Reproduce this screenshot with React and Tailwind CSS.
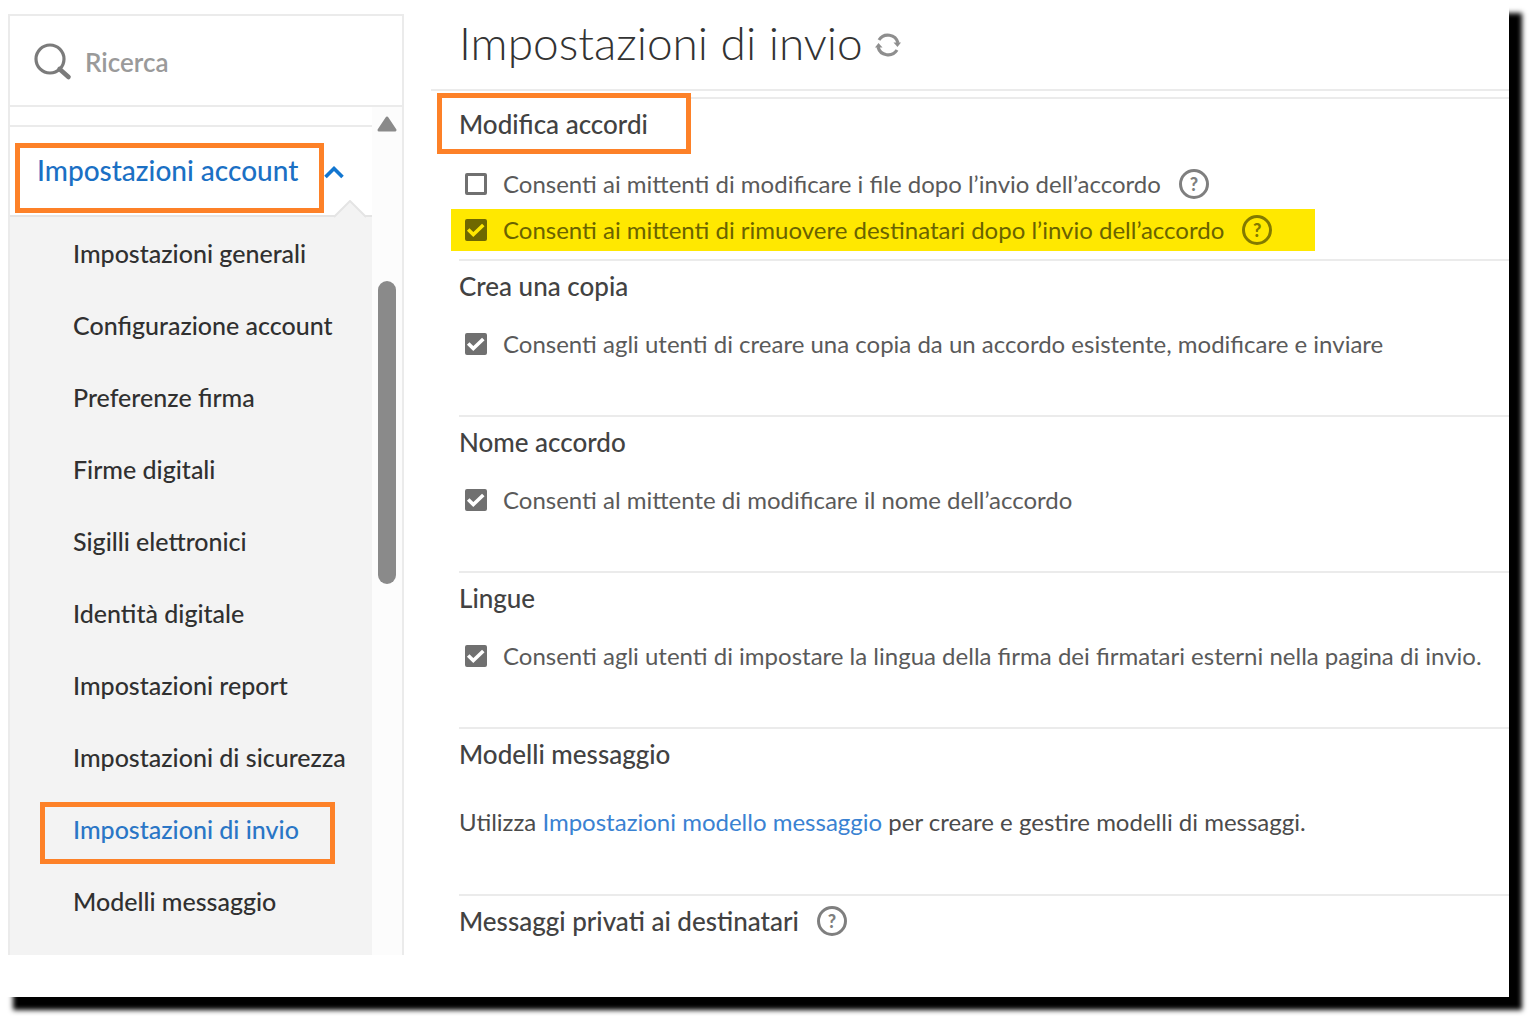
import React, { useState } from 'react';

const menuItems = [
  'Impostazioni generali',
  'Configurazione account',
  'Preferenze firma',
  'Firme digitali',
  'Sigilli elettronici',
  'Identità digitale',
  'Impostazioni report',
  'Impostazioni di sicurezza',
  'Impostazioni di invio',
  'Modelli messaggio',
];

const HelpButton = ({ highlighted }) => (
  <button
    type="button"
    aria-label="Aiuto"
    className={`ml-[18px] flex h-[30px] w-[30px] shrink-0 items-center justify-center rounded-full border-3 text-lg leading-5 font-black ${
      highlighted ? 'border-[#827a00] text-[#827a00]' : 'border-[#7f7f7f] text-[#7f7f7f]'
    }`}
  >
    ?
  </button>
);

const CheckOption = ({ id, label, defaultChecked, highlighted, help }) => {
  const [checked, setChecked] = useState(defaultChecked);

  return (
    <div className={`flex h-[42px] items-center ${highlighted ? 'text-[#6a6300]' : 'text-[#5a5a5a]'}`}>
      <span className="relative mr-4 h-[22px] w-[22px] shrink-0">
        <input
          id={id}
          type="checkbox"
          checked={checked}
          onChange={(e) => setChecked(e.target.checked)}
          className={`block h-[22px] w-[22px] appearance-none rounded-xs border-3 ${
            highlighted
              ? 'border-[#6f6800] checked:bg-[#6f6800]'
              : 'border-[#707070] checked:bg-[#707070]'
          }`}
        />
        {checked && (
          <svg
            viewBox="0 0 22 22"
            fill="none"
            stroke={highlighted ? '#ffe800' : '#ffffff'}
            strokeWidth="3.6"
            className="pointer-events-none absolute inset-0 h-[22px] w-[22px]"
          >
            <path d="M3.2 10.5 L8.3 15.5 L18.3 6" />
          </svg>
        )}
      </span>
      <label htmlFor={id} className="text-2xl whitespace-nowrap">{label}</label>
      {help && <HelpButton highlighted={highlighted} />}
    </div>
  );
};

const Section = ({ title, help, children }) => (
  <section className="border-t-2 border-[#ebebeb] pt-[9px]">
    <div className="flex h-8 items-center">
      <h2 className="text-[26px] leading-8 font-medium text-[#424242]">{title}</h2>
      {help && <HelpButton />}
    </div>
    {children}
  </section>
);

const Sidebar = () => (
  <aside className="mt-[14px] ml-2 w-[396px] shrink-0 border-2 border-b-0 border-[#ebebeb]">
    <div className="flex h-[91px] items-center border-b-2 border-[#ebebeb] pt-[2px] pl-6">
      <svg viewBox="0 0 38 38" fill="none" stroke="#7b7b7b" className="h-[38px] w-[38px] shrink-0">
        <circle cx="16" cy="16" r="14" strokeWidth="3.2" />
        <path d="M25.5 26 L34.5 34" strokeWidth="4.6" strokeLinecap="round" />
      </svg>
      <input
        type="text"
        aria-label="Ricerca"
        placeholder="Ricerca"
        className="ml-[13px] w-60 text-[26px] leading-8 font-semibold text-[#333333] outline-none placeholder:text-[#9a9a9a]"
      />
    </div>

    <div className="flex">
      <nav className="flex-1 bg-[#f3f3f3]">
        <div className="h-5 border-b-2 border-[#ebebeb] bg-white" />
        <div className="relative flex h-[90px] border-b-2 border-[#e4e4e4] bg-white pt-4 pl-[5px]">
          <button
            type="button"
            aria-expanded="true"
            className="flex h-[70px] w-[309px] shrink-0 items-center border-5 border-[#fd8128] pb-4 pl-[17px] text-[28px] leading-8 font-medium whitespace-nowrap text-[#1b70c4]"
          >
            Impostazioni account
          </button>
          <svg viewBox="0 0 20 14" fill="none" stroke="#1276d0" strokeWidth="3.6" className="mt-[22px] h-[14px] w-5">
            <path d="M1.5 12 L10 3.5 L18.5 12" />
          </svg>
          {/* punta del sottomenu */}
          <svg viewBox="0 0 32 18" className="absolute right-[6px] -bottom-[3px] h-[18px] w-8">
            <path d="M0 18 L16 2 L32 18 Z" fill="#f3f3f3" />
            <path d="M0 17 L16 1 L32 17" fill="none" stroke="#e4e4e4" strokeWidth="2" />
          </svg>
        </div>

        <ul className="pb-[18px] text-[25px] leading-8 font-medium whitespace-nowrap text-[#303030]">
          {menuItems.map((item) =>
            item === 'Impostazioni di invio' ? (
              <li key={item} className="h-[72px] pt-[9px] pl-[30px]">
                <a
                  href="#invio"
                  aria-current="page"
                  className="flex h-[62px] w-[295px] items-center border-5 border-[#fd8128] pb-2 pl-7 text-[#2a76c6]"
                >
                  {item}
                </a>
              </li>
            ) : (
              <li key={item}>
                <a href="#menu" className="flex h-[72px] items-center pl-[63px]">{item}</a>
              </li>
            )
          )}
        </ul>
      </nav>

      {/* barra di scorrimento */}
      <div className="flex w-[30px] flex-col items-center bg-[#fcfcfc] pt-[9px]">
        <svg viewBox="0 0 20 16" className="h-4 w-5">
          <path d="M10 2 L18 14 H2 Z" fill="#8a8a8a" stroke="#8a8a8a" strokeWidth="3" strokeLinejoin="round" />
        </svg>
        <div className="mt-[149px] h-[303px] w-[18px] rounded-full bg-[#8a8a8a]" />
      </div>
    </div>
  </aside>
);

const App = () => {
  return (
    <div className="overflow-hidden bg-white pr-[29px] pb-[19px] font-['Lato','Open_Sans',sans-serif]">
      <div className="flex bg-white pb-[42px] shadow-[13px_13px_5px_0_#000000]">
        <Sidebar />

        <main className="ml-[27px] min-w-0 flex-1">
          <header className="flex h-[91px] items-center border-b-2 border-[#ebebeb] pl-7">
            <h1 className="pb-1 text-[46px] leading-[52px] font-light text-[#333333]">Impostazioni di invio</h1>
            <button type="button" aria-label="Aggiorna" className="ml-3">
              <svg viewBox="0 0 26 26" fill="none" stroke="#8e8e8e" strokeWidth="3.2" className="h-[26px] w-[26px]">
                <path d="M4 8 A10.5 10.5 0 0 1 23 11" />
                <path d="M22 18 A10.5 10.5 0 0 1 3 15" />
                <path d="M18.5 10.5 H26 L22.5 15 Z" fill="#8e8e8e" stroke="none" />
                <path d="M0 15.5 H7.5 L3.5 11 Z" fill="#8e8e8e" stroke="none" />
              </svg>
            </button>
          </header>

          <div className="mt-[6px] pl-7">
            <section className="border-t-2 border-[#ebebeb]">
              <h2 className="relative -mt-[6px] -ml-[22px] flex h-[61px] w-[254px] items-center border-5 border-[#fd8128] bg-white pl-[17px] text-[26px] leading-8 font-medium text-[#424242]">
                Modifica accordi
              </h2>
              <div className="mt-[9px] pl-[6px]">
                <CheckOption id="modifica-file" label="Consenti ai mittenti di modificare i file dopo l’invio dell’accordo" defaultChecked={false} help />
              </div>
              <div className="mt-1 mb-2 -ml-2 w-[864px] max-w-full bg-[#ffe800] pl-[14px]">
                <CheckOption id="rimuovi-destinatari" label="Consenti ai mittenti di rimuovere destinatari dopo l’invio dell’accordo" defaultChecked highlighted help />
              </div>
            </section>

            <Section title="Crea una copia">
              <div className="mt-[21px] mb-[50px] pl-[6px]">
                <CheckOption id="crea-copia" label="Consenti agli utenti di creare una copia da un accordo esistente, modificare e inviare" defaultChecked />
              </div>
            </Section>

            <Section title="Nome accordo">
              <div className="mt-[21px] mb-[50px] pl-[6px]">
                <CheckOption id="nome-accordo" label="Consenti al mittente di modificare il nome dell’accordo" defaultChecked />
              </div>
            </Section>

            <Section title="Lingue">
              <div className="mt-[21px] mb-[50px] pl-[6px]">
                <CheckOption id="lingue" label="Consenti agli utenti di impostare la lingua della firma dei firmatari esterni nella pagina di invio." defaultChecked />
              </div>
            </Section>

            <Section title="Modelli messaggio">
              <p className="mt-9 mb-14 text-2xl text-[#4b4b4b]">
                Utilizza <a href="#modello" className="text-[#3a82d2]">Impostazioni modello messaggio</a> per creare e gestire modelli di messaggi.
              </p>
            </Section>

            <Section title="Messaggi privati ai destinatari" help />
          </div>
        </main>
      </div>
    </div>
  );
};

export default App;
